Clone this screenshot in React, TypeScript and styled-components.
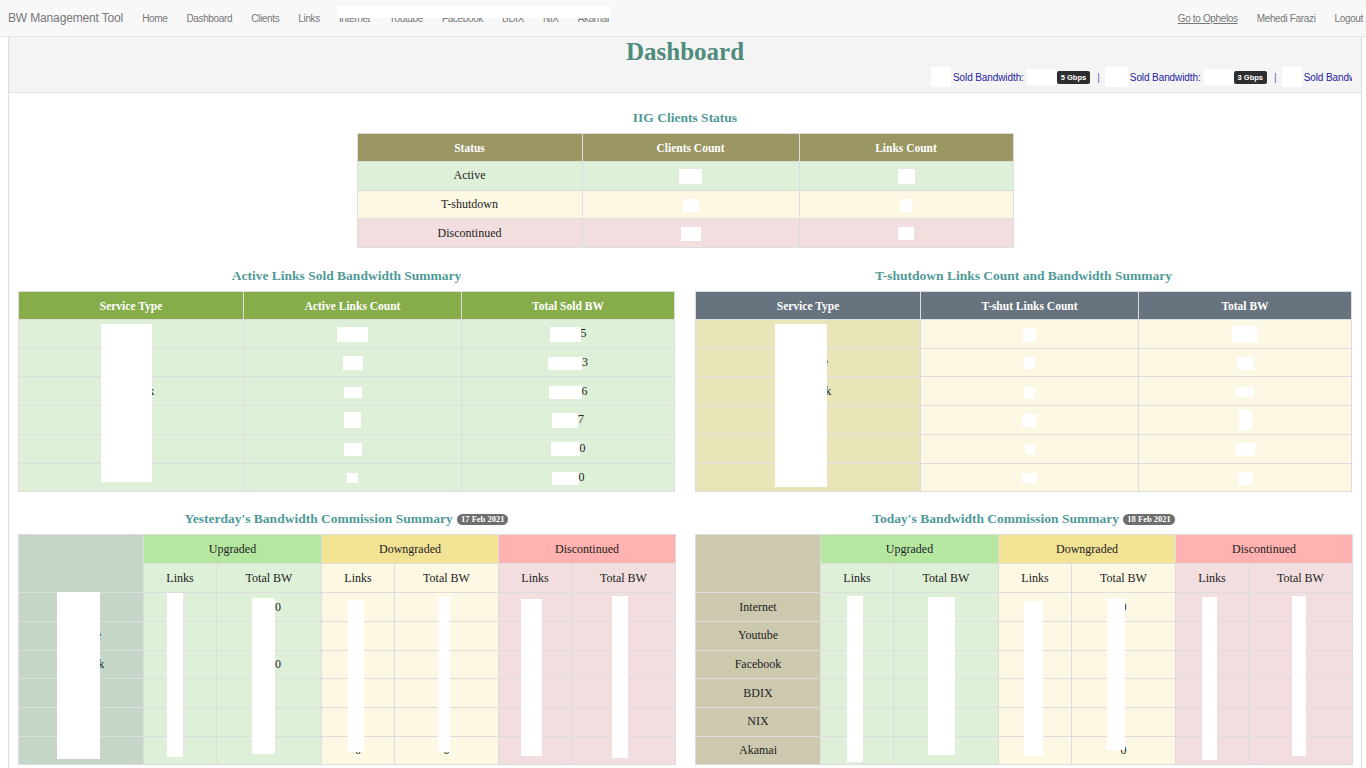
import styled, { createGlobalStyle } from 'styled-components';

const services = ['Internet', 'Youtube', 'Facebook', 'BDIX', 'NIX', 'Akamai'];

type Box = [number, number];

const iigRows: { label: string; tone: string; clients: Box; links: Box }[] = [
  { label: 'Active', tone: '#dff0d8', clients: [23, 15], links: [17, 15] },
  { label: 'T-shutdown', tone: '#fcf8e3', clients: [16, 13], links: [12, 13] },
  { label: 'Discontinued', tone: '#f2dede', clients: [20, 14], links: [16, 13] },
];

const activeRows: { count: Box; bw: Box; digit: string }[] = [
  { count: [31, 15], bw: [31, 15], digit: '5' },
  { count: [20, 14], bw: [34, 13], digit: '3' },
  { count: [18, 11], bw: [33, 13], digit: '6' },
  { count: [17, 16], bw: [26, 15], digit: '7' },
  { count: [18, 13], bw: [29, 14], digit: '0' },
  { count: [11, 10], bw: [27, 13], digit: '0' },
];

const tshutRows: { count: Box; bw: Box }[] = [
  { count: [13, 14], bw: [26, 16] },
  { count: [11, 12], bw: [17, 13] },
  { count: [11, 11], bw: [18, 10] },
  { count: [15, 13], bw: [13, 20] },
  { count: [10, 10], bw: [20, 13] },
  { count: [15, 10], bw: [15, 13] },
];

// white blocks lying over the table, [left, top, width, height]
type Mask = [number, number, number, number];

const yesterdayMasks: Mask[] = [
  [39, 58, 43, 167],
  [149, 59, 16, 164],
  [234, 64, 23, 156],
  [330, 66, 16, 152],
  [420, 63, 12, 155],
  [503, 65, 21, 157],
  [594, 62, 16, 162],
];

const todayMasks: Mask[] = [
  [152, 62, 16, 166],
  [233, 63, 27, 158],
  [329, 67, 19, 155],
  [412, 64, 18, 152],
  [507, 63, 15, 163],
  [597, 62, 14, 160],
];

const yesterdayValues: Record<string, string> = {
  'Upgraded-l-0': '1',
  'Upgraded-l-1': '0',
  'Upgraded-l-2': '1',
  'Upgraded-l-3': '0',
  'Upgraded-l-4': '0',
  'Upgraded-l-5': '0',
  'Upgraded-t-0': '1000',
  'Upgraded-t-2': '1000',
  'Downgraded-l-5': '0',
  'Downgraded-t-5': '0',
};

const todayValues: Record<string, string> = {
  'Upgraded-t-2': '0',
  'Downgraded-t-0': '0',
  'Downgraded-t-5': '0',
};

const groups = [
  { name: 'Upgraded', head: '#b5e7a0', body: '#dff0d8' },
  { name: 'Downgraded', head: '#f2e394', body: '#fcf8e3' },
  { name: 'Discontinued', head: '#ffb2b0', body: '#f2dede' },
];

function Redact({ box }: { box: Box }) {
  return <RedactBox $w={box[0]} $h={box[1]} />;
}

function CommissionTable({
  title,
  date,
  labelTone,
  masks,
  values,
}: {
  title: string;
  date: string;
  labelTone: string;
  masks: Mask[];
  values: Record<string, string>;
}) {
  return (
    <section>
      <SectionTitle>
        {title} <DateBadge>{date}</DateBadge>
      </SectionTitle>
      <TableWrap>
        <Table>
          <colgroup>
            <col style={{ width: 125 }} />
            <col style={{ width: 73 }} />
            <col style={{ width: 105 }} />
            <col style={{ width: 73 }} />
            <col style={{ width: 104 }} />
            <col style={{ width: 73 }} />
            <col style={{ width: 104 }} />
          </colgroup>
          <thead>
            <tr>
              <GroupHead rowSpan={2} $bg={labelTone} />
              {groups.map((g) => (
                <GroupHead key={g.name} colSpan={2} $bg={g.head}>
                  {g.name}
                </GroupHead>
              ))}
            </tr>
            <tr>
              {groups.map((g) => [
                <GroupHead key={g.name + 'l'} $bg={g.body}>Links</GroupHead>,
                <GroupHead key={g.name + 't'} $bg={g.body}>Total BW</GroupHead>,
              ])}
            </tr>
          </thead>
          <tbody>
            {services.map((s, i) => (
              <tr key={s}>
                <Cell $bg={labelTone}>{s}</Cell>
                {groups.map((g) => [
                  <Cell key={g.name + 'l'} $bg={g.body}>
                    {values[`${g.name}-l-${i}`] ?? ''}
                  </Cell>,
                  <Cell key={g.name + 't'} $bg={g.body}>
                    {values[`${g.name}-t-${i}`] ?? ''}
                  </Cell>,
                ])}
              </tr>
            ))}
          </tbody>
        </Table>
        {masks.map((m, i) => (
          <Mask key={i} $x={m[0]} $y={m[1]} $w={m[2]} $h={m[3]} />
        ))}
      </TableWrap>
    </section>
  );
}

export default function App() {
  return (
    <>
      <GlobalStyle />
      <Navbar>
        <Brand>BW Management Tool</Brand>
        <NavList>
          <NavItem>Home</NavItem>
          <NavItem>Dashboard</NavItem>
          <NavItem>Clients</NavItem>
          <NavItem>Links</NavItem>
          <HiddenGroup>
            <NavItem>Internet</NavItem>
            <NavItem>Youtube</NavItem>
            <NavItem>Facebook</NavItem>
            <NavItem>BDIX</NavItem>
            <NavItem>NIX</NavItem>
            <NavItem>Akamai</NavItem>
            <NavMask />
          </HiddenGroup>
        </NavList>
        <NavRight>
          <NavItem $underline>Go to Ophelos</NavItem>
          <NavItem>Mehedi Farazi</NavItem>
          <NavItem>Logout</NavItem>
        </NavRight>
      </Navbar>

      <Container>
        <PageHeader>
          <PageTitle>Dashboard</PageTitle>
          <Marquee>
            <Redact box={[20, 20]} />
            <SoldLabel>Sold Bandwidth:</SoldLabel>
            <Redact box={[30, 16]} />
            <GbpsBadge>5 Gbps</GbpsBadge>
            <Sep>|</Sep>
            <Redact box={[23, 20]} />
            <SoldLabel>Sold Bandwidth:</SoldLabel>
            <Redact box={[30, 16]} />
            <GbpsBadge>3 Gbps</GbpsBadge>
            <Sep>|</Sep>
            <Redact box={[20, 24]} />
            <SoldLabel>Sold Bandwidth:</SoldLabel>
          </Marquee>
        </PageHeader>

        <Content>
          <Centered>
            <SectionTitle>IIG Clients Status</SectionTitle>
            <Table>
              <thead>
                <tr>
                  <HeadCell $bg="#999661" $w={224}>Status</HeadCell>
                  <HeadCell $bg="#999661" $w={216}>Clients Count</HeadCell>
                  <HeadCell $bg="#999661">Links Count</HeadCell>
                </tr>
              </thead>
              <tbody>
                {iigRows.map((r) => (
                  <tr key={r.label}>
                    <Cell $bg={r.tone}>{r.label}</Cell>
                    <Cell $bg={r.tone}>
                      <Redact box={r.clients} />
                    </Cell>
                    <Cell $bg={r.tone}>
                      <Redact box={r.links} />
                    </Cell>
                  </tr>
                ))}
              </tbody>
            </Table>
          </Centered>

          <TwoCols>
            <section>
              <SectionTitle>Active Links Sold Bandwidth Summary</SectionTitle>
              <TableWrap>
                <Table>
                  <thead>
                    <tr>
                      <HeadCell $bg="#86ad4a" $w={224}>Service Type</HeadCell>
                      <HeadCell $bg="#86ad4a" $w={217}>Active Links Count</HeadCell>
                      <HeadCell $bg="#86ad4a">Total Sold BW</HeadCell>
                    </tr>
                  </thead>
                  <tbody>
                    {activeRows.map((r, i) => (
                      <tr key={i}>
                        <Cell $bg="#dff0d8">{services[i]}</Cell>
                        <Cell $bg="#dff0d8">
                          <Redact box={r.count} />
                        </Cell>
                        <Cell $bg="#dff0d8">
                          <Redact box={r.bw} />
                          {r.digit}
                        </Cell>
                      </tr>
                    ))}
                  </tbody>
                </Table>
                <Mask $x={83} $y={33} $w={51} $h={158} />
              </TableWrap>
            </section>

            <section>
              <SectionTitle>T-shutdown Links Count and Bandwidth Summary</SectionTitle>
              <TableWrap>
                <Table>
                  <thead>
                    <tr>
                      <HeadCell $bg="#67737e" $w={224}>Service Type</HeadCell>
                      <HeadCell $bg="#67737e" $w={217}>T-shut Links Count</HeadCell>
                      <HeadCell $bg="#67737e">Total BW</HeadCell>
                    </tr>
                  </thead>
                  <tbody>
                    {tshutRows.map((r, i) => (
                      <tr key={i}>
                        <Cell $bg="#e8e6b8">{services[i]}</Cell>
                        <Cell $bg="#fcf8e3">
                          <Redact box={r.count} />
                        </Cell>
                        <Cell $bg="#fcf8e3">
                          <Redact box={r.bw} />
                        </Cell>
                      </tr>
                    ))}
                  </tbody>
                </Table>
                <Mask $x={80} $y={33} $w={52} $h={163} />
              </TableWrap>
            </section>

            <CommissionTable
              title="Yesterday's Bandwidth Commission Summary"
              date="17 Feb 2021"
              labelTone="#c5d5c7"
              masks={yesterdayMasks}
              values={yesterdayValues}
            />
            <CommissionTable
              title="Today's Bandwidth Commission Summary"
              date="18 Feb 2021"
              labelTone="#ccc9ae"
              masks={todayMasks}
              values={todayValues}
            />
          </TwoCols>
        </Content>
      </Container>
    </>
  );
}

const GlobalStyle = createGlobalStyle`
  body {
    margin: 0;
    background: #fff;
    font-family: "Liberation Sans", Arial, sans-serif;
    overflow: hidden;
  }
`;

const Navbar = styled.nav`
  height: 36px;
  display: flex;
  align-items: center;
  padding: 0 3px 0 8px;
  background: #f8f8f8;
  border-bottom: 1px solid #e7e7e7;
  font-family: "Liberation Sans", Arial, sans-serif;
`;

const Brand = styled.div`
  font-size: 12px;
  color: #777;
  letter-spacing: -0.15px;
  margin-right: 19px;
`;

const NavList = styled.div`
  display: flex;
  align-items: center;
  gap: 19px;
`;

const HiddenGroup = styled.div`
  position: relative;
  display: flex;
  align-items: center;
  gap: 19px;
`;

const NavMask = styled.div`
  position: absolute;
  left: -2px;
  right: -2px;
  top: -7px;
  height: 12px;
  background: #fff;
`;

const NavItem = styled.span<{ $underline?: boolean }>`
  font-size: 10px;
  color: #777;
  letter-spacing: -0.35px;
  text-decoration: ${(p) => (p.$underline ? 'underline' : 'none')};
`;

const NavRight = styled.div`
  margin-left: auto;
  display: flex;
  align-items: center;
  gap: 19px;
`;

const Container = styled.div`
  margin: 0 4px 0 8px;
  border-left: 1px solid #ddd;
  border-right: 1px solid #ddd;
  min-height: 731px;
`;

const PageHeader = styled.header`
  height: 55px;
  background: #f4f4f4;
  border-bottom: 1px solid #e2e2e2;
  display: flex;
  flex-direction: column;
`;

const PageTitle = styled.h1`
  margin: 0;
  height: 30px;
  line-height: 30px;
  text-align: center;
  font-family: "Liberation Serif", "Times New Roman", serif;
  font-size: 25px;
  font-weight: bold;
  color: #4f8c7c;
`;

const Marquee = styled.div`
  height: 20px;
  display: flex;
  align-items: center;
  white-space: nowrap;
  overflow: hidden;
  padding-left: 922px;
  margin-right: 9px;
  font-family: "Liberation Sans", Arial, sans-serif;
  font-size: 10px;
  color: #2323a0;

  & > * {
    flex-shrink: 0;
  }
`;

const SoldLabel = styled.span`
  margin: 0 3px 0 2px;
  letter-spacing: -0.1px;
`;

const GbpsBadge = styled.span`
  display: inline-block;
  background: #2e2e2e;
  color: #fff;
  font-size: 7.5px;
  font-weight: bold;
  padding: 2px 4px;
  border-radius: 2px;
  line-height: 9px;
`;

const Sep = styled.span`
  margin: 0 5px 0 7px;
  color: #5a5ab0;
`;

const RedactBox = styled.span<{ $w: number; $h: number }>`
  display: inline-block;
  width: ${(p) => p.$w}px;
  height: ${(p) => p.$h}px;
  background: #fff;
  vertical-align: middle;
`;

const Content = styled.main`
  padding: 17px 9px 0;
  background: #fff;
`;

const Centered = styled.section`
  width: 657px;
  margin: 0 auto 20px;
`;

const TwoCols = styled.div`
  display: grid;
  grid-template-columns: minmax(0, 1fr) minmax(0, 1fr);
  column-gap: 20px;
  row-gap: 19px;
`;

const SectionTitle = styled.h3`
  margin: 0 0 7px;
  height: 16px;
  line-height: 16px;
  text-align: center;
  font-family: "Liberation Serif", "Times New Roman", serif;
  font-size: 13.5px;
  font-weight: bold;
  color: #4f9a97;
  white-space: nowrap;
`;

const DateBadge = styled.span`
  display: inline-block;
  background: #6e6e6e;
  color: #fff;
  font-size: 8.5px;
  font-weight: bold;
  line-height: 11px;
  padding: 0 4px;
  border-radius: 6px;
  vertical-align: 1px;
  margin-left: 1px;
`;

const TableWrap = styled.div`
  position: relative;
`;

const Mask = styled.div<{ $x: number; $y: number; $w: number; $h: number }>`
  position: absolute;
  left: ${(p) => p.$x}px;
  top: ${(p) => p.$y}px;
  width: ${(p) => p.$w}px;
  height: ${(p) => p.$h}px;
  background: #fff;
`;

const Table = styled.table`
  width: 100%;
  border-collapse: collapse;
  table-layout: fixed;
  font-family: "Liberation Serif", "Times New Roman", serif;
  font-size: 12px;
  color: #222;
  text-align: center;
`;

const HeadCell = styled.th<{ $bg: string; $w?: number }>`
  height: 27px;
  padding: 0;
  background: ${(p) => p.$bg};
  color: #fff;
  font-size: 11.5px;
  font-weight: bold;
  border: 1px solid #ddd;
  width: ${(p) => (p.$w ? `${p.$w}px` : 'auto')};
`;

const GroupHead = styled.th<{ $bg: string }>`
  height: 28px;
  padding: 0;
  background: ${(p) => p.$bg};
  color: #222;
  font-weight: normal;
  border: 1px solid #ddd;
`;

const Cell = styled.td<{ $bg: string }>`
  height: 27.7px;
  padding: 0;
  background: ${(p) => p.$bg};
  border: 1px solid #ddd;
  white-space: nowrap;
`;
